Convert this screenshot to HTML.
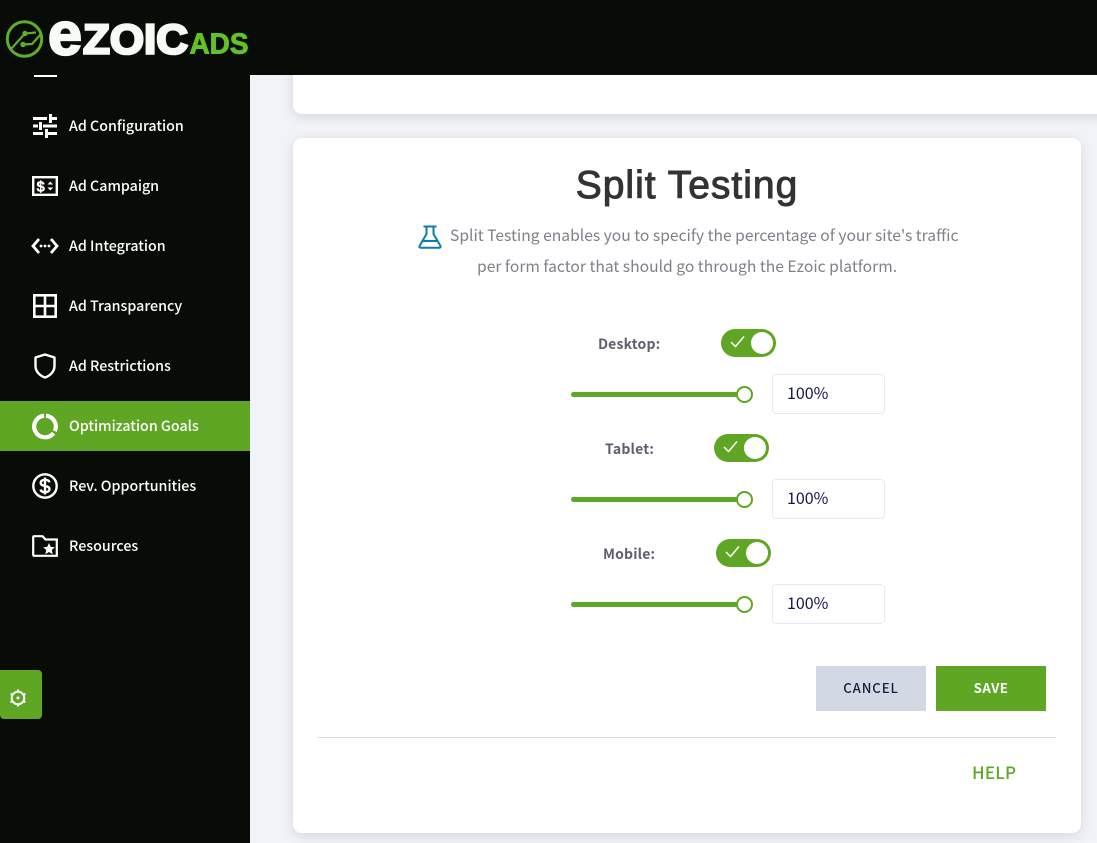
<!DOCTYPE html>
<html><head><meta charset="utf-8"><title>Split Testing</title>
<style>
*{box-sizing:border-box}
html,body{margin:0;padding:0}
body{width:1097px;height:843px;position:relative;overflow:hidden;background:#f2f3f8;font-family:"Noto Sans CJK JP","Liberation Sans",sans-serif}
.a{position:absolute}
.t{position:absolute;white-space:nowrap}
.nav{left:69px;color:#fff;font-size:14.25px;line-height:20px;font-weight:500}
.card{background:#fff;box-shadow:0 3px 12px rgba(40,50,70,.14)}
.lbl{font-size:14px;font-weight:600;color:#5e5f6e;line-height:20px;letter-spacing:.17px}
.tog{position:absolute;width:55px;height:28px;border-radius:14px;background:#5fa624}
.tog i{position:absolute;right:3px;top:3px;width:22px;height:22px;border-radius:50%;background:#fff}
.tog svg{position:absolute;left:8px;top:5px}
.track{position:absolute;left:571px;width:170px;height:5px;background:#5fa624;border-radius:3px}
.knob{position:absolute;left:736px;width:17px;height:17px;border-radius:50%;background:#fff;border:2px solid #5fa624}
.inp{position:absolute;left:772px;width:113px;height:40px;border:1px solid #e6eaf1;border-radius:4px;background:#fff;color:#15154f;font-size:16px;line-height:34px;padding-left:14px}
.btn{position:absolute;top:666px;width:110px;height:45px;text-align:center;line-height:44px;font-size:13.2px;letter-spacing:.9px}
</style></head>
<body>
<div class="a" style="left:0;top:0;width:1097px;height:75px;background:#080b06"></div>
<div class="a" style="left:0;top:75px;width:250px;height:768px;background:#080b06"></div>

<svg class="a" style="left:5px;top:19px" width="40" height="40" viewBox="0 0 40 40" fill="none" stroke="#5eae2a">
<circle cx="19.500" cy="20" r="17.200" stroke-width="3"/>
<path d="M6 30L20 14.500L31 13.500" stroke-width="2.200"/>
<path d="M18 25.500L27 25L36 15" stroke-width="2.200"/>
<circle cx="20" cy="14.500" r="2.700" fill="#5eae2a" stroke="none"/>
<circle cx="18" cy="25.500" r="2.700" fill="#5eae2a" stroke="none"/>
</svg>
<svg class="a" style="left:46px;top:15px" width="210" height="50" viewBox="0 0 210 50">
<text x="2" y="39.500" font-family="Liberation Sans" font-weight="700" font-size="60" fill="#f8faf5" stroke="#f8faf5" stroke-width="2.200" textLength="34" lengthAdjust="spacingAndGlyphs">e</text>
<text x="37" y="38.500" font-family="Liberation Sans" font-weight="700" font-size="42" fill="#f8faf5" stroke="#f8faf5" stroke-width="2.600" textLength="105" lengthAdjust="spacingAndGlyphs">ZOIC</text>
<text x="143.500" y="38.500" font-family="Liberation Sans" font-weight="700" font-size="29" fill="#62c028" stroke="#62c028" stroke-width=".9" textLength="59" lengthAdjust="spacingAndGlyphs">ADS</text>
</svg>

<div class="a" style="left:34px;top:75px;width:23px;height:2px;background:#fff"></div>

<!-- Ad Configuration icon -->
<svg class="a" style="left:33px;top:114px" width="25" height="24" viewBox="0 0 25 24" fill="#fff">
<rect x="0" y="3" width="14" height="3"/><rect x="16" y="0" width="3" height="9"/><rect x="16" y="3" width="8" height="3"/>
<rect x="0" y="10.500" width="5" height="3"/><rect x="6" y="8" width="3" height="8"/><rect x="10" y="10.500" width="14" height="3"/>
<rect x="0" y="18" width="10" height="3"/><rect x="12" y="15" width="3" height="9"/><rect x="15" y="18" width="9" height="3"/>
</svg>
<div class="t nav" style="top:116px">Ad Configuration</div>

<!-- Ad Campaign icon -->
<svg class="a" style="left:32px;top:176px" width="26" height="20" viewBox="0 0 26 20">
<rect x="1.200" y="1.200" width="23.600" height="17.600" fill="none" stroke="#fff" stroke-width="2.400"/>
<text x="4.500" y="15.500" font-family="Liberation Sans" font-weight="700" font-size="15" fill="#fff" stroke="#fff" stroke-width=".4">$</text>
<path d="M15.500 8.500l2.800-3 2.800 3zM15.500 11.500l2.800 3 2.800-3z" fill="#fff"/>
</svg>
<div class="t nav" style="top:176px">Ad Campaign</div>

<!-- Ad Integration icon -->
<svg class="a" style="left:31px;top:236px" width="28" height="20" viewBox="0 0 28 20" fill="none" stroke="#fff" stroke-width="2.800">
<path d="M8 3L2 10l6 7M20 3l6 7-6 7"/>
<g fill="#fff" stroke="none"><circle cx="10" cy="10" r="1.400"/><circle cx="14" cy="10" r="1.400"/><circle cx="18" cy="10" r="1.400"/></g>
</svg>
<div class="t nav" style="top:236px">Ad Integration</div>

<!-- Ad Transparency icon -->
<svg class="a" style="left:33px;top:294px" width="24" height="24" viewBox="0 0 24 24" fill="none" stroke="#fff" stroke-width="2.600">
<rect x="1.300" y="1.300" width="21.400" height="21.400"/><path d="M12 1v22M1 12h22"/>
</svg>
<div class="t nav" style="top:296px">Ad Transparency</div>

<!-- Ad Restrictions icon -->
<svg class="a" style="left:34px;top:353px" width="22" height="26" viewBox="0 0 22 26" fill="none" stroke="#fff" stroke-width="2.400">
<path d="M11 1.500L20.500 4.500V13C20.500 19 15.500 23 11 24.500C6.500 23 1.500 19 1.500 13V4.500Z" stroke-linejoin="round"/>
</svg>
<div class="t nav" style="top:356px">Ad Restrictions</div>

<!-- Optimization Goals active -->
<div class="a" style="left:0;top:401px;width:250px;height:50px;background:#5fa624"></div>
<svg class="a" style="left:32px;top:413px" width="26" height="27" viewBox="0 0 26 27" fill="none" stroke="#fff" stroke-width="4.200">
<path d="M13.940 2.740A10.800 10.800 0 0 1 22.790 18.070"/>
<path d="M21.500 20.150A10.800 10.800 0 1 1 12.060 2.740"/>
</svg>
<div class="t nav" style="top:416px">Optimization Goals</div>

<!-- Rev Opportunities -->
<svg class="a" style="left:32px;top:473px" width="26" height="26" viewBox="0 0 26 26" fill="none" stroke="#fff">
<circle cx="13" cy="13" r="11.700" stroke-width="2.400"/>
<path d="M17.500 9.300C17 7.500 15 6.800 13 6.800C10.500 6.800 8.700 8 8.700 10C8.700 14 17.500 12 17.500 16C17.500 18 15.500 19.200 13 19.200C10.800 19.200 9 18.300 8.500 16.500M13 4.500V21.500" stroke-width="2.400"/>
</svg>
<div class="t nav" style="top:476px">Rev. Opportunities</div>

<!-- Resources -->
<svg class="a" style="left:32px;top:535px" width="26" height="22" viewBox="0 0 26 22">
<path d="M1.200 2.200Q1.200 1.200 2.200 1.200H10.500L13.500 4.500H24.800V20.800H2.200Q1.200 20.800 1.200 19.800Z" fill="none" stroke="#fff" stroke-width="2.200"/>
<path d="M17 8l1.800 3.900 4 .4-3 2.700.9 4.200-3.700-2.200-3.700 2.200.9-4.200-3-2.700 4-.4z" fill="#fff"/>
</svg>
<div class="t nav" style="top:536px">Resources</div>

<!-- Gear button -->
<div class="a" style="left:0;top:670px;width:42px;height:49px;background:#5fa624;border-radius:0 4px 4px 4px"></div>
<svg class="a" style="left:8px;top:688px" width="20" height="20" viewBox="0 0 20 20" fill="none" stroke="#fff">
<circle cx="10" cy="10" r="6.300" stroke-width="2"/>
<circle cx="10" cy="10" r="1.500" fill="#fff" stroke="none"/>
<path d="M10 1.500v1.800M10 16.700v1.800M2.600 5.700l1.600 1M15.800 13.300l1.600 1M2.600 14.300l1.600-1M15.800 6.700l1.600-1" stroke-width="2"/>
</svg>

<!-- Top card -->
<div class="a card" style="left:293px;top:60px;width:830px;height:54px;border-radius:9px"></div>
<div class="a" style="left:250px;top:0;width:847px;height:75px;background:#080b06"></div>

<!-- Main card -->
<div class="a card" style="left:293px;top:138px;width:788px;height:695px;border-radius:9px"></div>

<div class="t" style="left:293px;width:788px;top:161px;text-align:center;font-family:'Liberation Sans',sans-serif;font-size:39px;line-height:50px;color:#333333;-webkit-text-stroke:1px #333;letter-spacing:1px">Split Testing</div>

<svg class="a" style="left:417px;top:225px" width="26" height="24" viewBox="0 0 26 24" fill="none" stroke="#0a7cab" stroke-width="2">
<path d="M6.500 1.500H19.500M9.500 1.500V9L2.500 21Q2 22.800 3.800 22.800H22.200Q24 22.800 23.500 21L16.500 9V1.500M6 16H20"/>
</svg>
<div class="t" style="left:450px;top:223px;font-size:15.650px;line-height:24px;color:#80808a">Split Testing enables you to specify the percentage of your site's traffic</div>
<div class="t" style="left:477px;top:254px;font-size:15.650px;line-height:24px;color:#80808a">per form factor that should go through the Ezoic platform.</div>

<!-- Desktop -->
<div class="t lbl" style="left:598px;top:334px">Desktop:</div>
<div class="tog" style="left:721px;top:329px"><svg width="18" height="16" viewBox="0 0 18 16" fill="none" stroke="#fff" stroke-width="1.500"><path d="M2 8l4.500 4.500L15 2.500"/></svg><i></i></div>
<div class="track" style="top:392px"></div><div class="knob" style="top:386px"></div>
<div class="inp" style="top:374px">100%</div>

<!-- Tablet -->
<div class="t lbl" style="left:605px;top:439px">Tablet:</div>
<div class="tog" style="left:714px;top:434px"><svg width="18" height="16" viewBox="0 0 18 16" fill="none" stroke="#fff" stroke-width="1.500"><path d="M2 8l4.500 4.500L15 2.500"/></svg><i></i></div>
<div class="track" style="top:497px"></div><div class="knob" style="top:491px"></div>
<div class="inp" style="top:479px">100%</div>

<!-- Mobile -->
<div class="t lbl" style="left:603px;top:544px">Mobile:</div>
<div class="tog" style="left:716px;top:539px"><svg width="18" height="16" viewBox="0 0 18 16" fill="none" stroke="#fff" stroke-width="1.500"><path d="M2 8l4.500 4.500L15 2.500"/></svg><i></i></div>
<div class="track" style="top:602px"></div><div class="knob" style="top:596px"></div>
<div class="inp" style="top:584px">100%</div>

<div class="btn" style="left:816px;background:#d2d8e4;color:#15213a;font-weight:500">CANCEL</div>
<div class="btn" style="left:936px;background:#5fa624;color:#fff;font-weight:700;letter-spacing:.5px">SAVE</div>

<div class="a" style="left:318px;top:737px;width:738px;height:1px;background:#dedede"></div>
<div class="t" style="left:972px;top:759px;font-size:17px;line-height:26px;color:#5fa624;font-weight:500;letter-spacing:.25px">HELP</div>
</body></html>
